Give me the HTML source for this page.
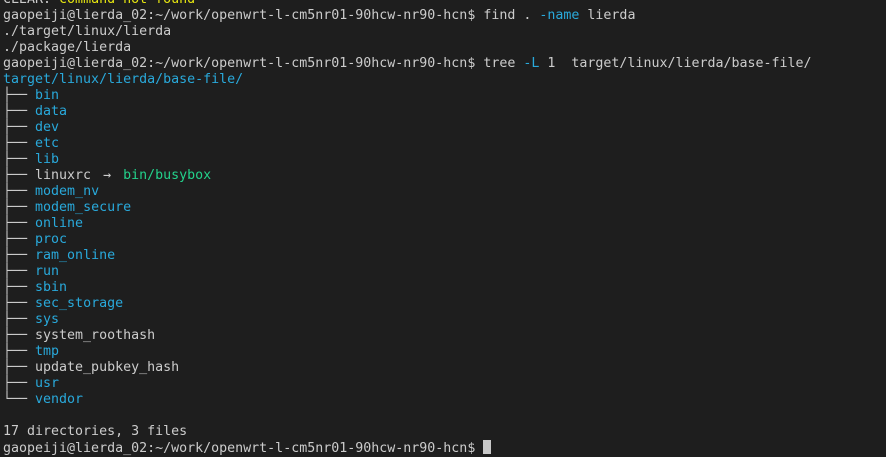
<!DOCTYPE html>
<html><head><meta charset="utf-8"><style>
html,body{margin:0;padding:0;background:#1e1e1e;width:886px;height:457px;overflow:hidden}
pre{position:absolute;left:3px;top:-8px;margin:0;font-family:"DejaVu Sans Mono","Liberation Mono",monospace;font-size:13.3px;line-height:16px;color:#cccccc;letter-spacing:0}
pre span.l{display:block;height:16px;white-space:pre}
.b{color:#29a9db}.g{color:#23d18b}.y{color:#e5e510}
.a{display:inline-block;width:16px;height:16px;line-height:16px;text-align:center;vertical-align:top;overflow:hidden}
.cur{display:inline-block;width:8px;height:14px;background:#c8c8c8;vertical-align:-2px}
</style></head><body><pre>
<span class="l">CLEAR: <span class="y">command not found</span></span><span class="l">gaopeiji@lierda_02:~/work/openwrt-l-cm5nr01-90hcw-nr90-hcn$ find . <span class="b">-name</span> lierda</span><span class="l">./target/linux/lierda</span><span class="l">./package/lierda</span><span class="l">gaopeiji@lierda_02:~/work/openwrt-l-cm5nr01-90hcw-nr90-hcn$ tree <span class="b">-L</span> 1  target/linux/lierda/base-file/</span><span class="l b">target/linux/lierda/base-file/</span><span class="l">├── <span class="b">bin</span></span><span class="l">├── <span class="b">data</span></span><span class="l">├── <span class="b">dev</span></span><span class="l">├── <span class="b">etc</span></span><span class="l">├── <span class="b">lib</span></span><span class="l">├── linuxrc <span class="a">→</span> <span class="g">bin/busybox</span></span><span class="l">├── <span class="b">modem_nv</span></span><span class="l">├── <span class="b">modem_secure</span></span><span class="l">├── <span class="b">online</span></span><span class="l">├── <span class="b">proc</span></span><span class="l">├── <span class="b">ram_online</span></span><span class="l">├── <span class="b">run</span></span><span class="l">├── <span class="b">sbin</span></span><span class="l">├── <span class="b">sec_storage</span></span><span class="l">├── <span class="b">sys</span></span><span class="l">├── system_roothash</span><span class="l">├── <span class="b">tmp</span></span><span class="l">├── update_pubkey_hash</span><span class="l">├── <span class="b">usr</span></span><span class="l">└── <span class="b">vendor</span></span><span class="l"> </span><span class="l">17 directories, 3 files</span><span class="l">gaopeiji@lierda_02:~/work/openwrt-l-cm5nr01-90hcw-nr90-hcn$ <span class="cur"></span></span></pre>
</body></html>
